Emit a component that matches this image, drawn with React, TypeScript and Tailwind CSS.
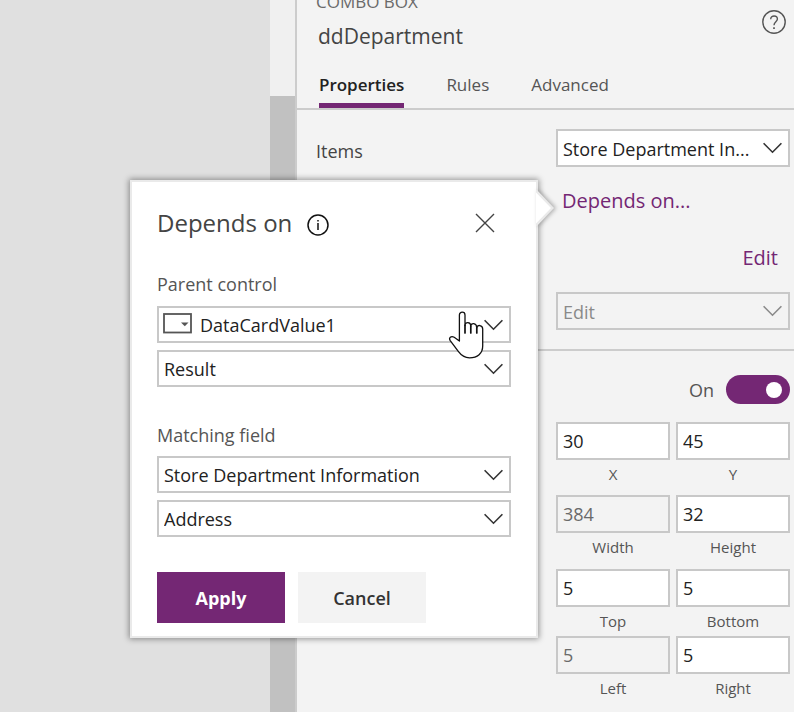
import { useState } from 'react'
import type { ReactNode } from 'react'

type SelectProps = {
  label: string
  options: string[]
  icon?: ReactNode
  disabled?: boolean
  className?: string
}

function Chevron({ disabled }: { disabled?: boolean }) {
  return (
    <svg
      className="pointer-events-none absolute right-2 top-1/2 -translate-y-1/2"
      width="19"
      height="12"
      viewBox="0 0 19 12"
      fill="none"
      stroke={disabled ? '#8a8a8a' : '#333333'}
      strokeWidth="1.6"
    >
      <path d="M0.6 1.2 9.5 10.2 18.4 1.2" />
    </svg>
  )
}

function Select({ label, options, icon, disabled, className = 'h-[37px]' }: SelectProps) {
  return (
    <div className={`relative ${disabled ? 'text-[#8a8a8a]' : 'text-[#222222]'}`}>
      <select
        aria-label={label}
        disabled={disabled}
        className={`block w-full appearance-none border-2 border-[#c8c8c8] pr-7 pt-px text-lg ${
          icon ? 'pl-[41px]' : 'pl-[5px]'
        } ${disabled ? 'bg-[#f3f3f3] opacity-100' : 'bg-white'} ${className}`}
      >
        {options.map((option) => (
          <option key={option}>{option}</option>
        ))}
      </select>
      {icon}
      <Chevron disabled={disabled} />
    </div>
  )
}

function ComboIcon() {
  return (
    <svg
      className="pointer-events-none absolute left-[6px] top-[7px]"
      width="29"
      height="21"
      viewBox="0 0 29 21"
    >
      <rect x="1" y="1" width="27" height="18.5" fill="#fff" stroke="#555" strokeWidth="1.8" />
      <path d="M18 9.5h7.5l-3.7 3.8z" fill="#555" />
    </svg>
  )
}

function HandPointer() {
  return (
    <svg
      className="pointer-events-none absolute right-[51px] top-[129px]"
      width="37"
      height="49"
      viewBox="0 0 37 49"
      fill="#fff"
      stroke="#111"
      strokeWidth="1.3"
      strokeLinecap="round"
      strokeLinejoin="round"
    >
      <path d="M11.4 30V4A2.8 2.8 0 0 1 17 4V14.5C17 10.6 22.6 10.6 22.8 15C22.8 11.6 28.6 11.8 28.8 16.6C29.2 13.4 34.7 13.8 34.7 18V35C34.7 42.5 29.5 46.8 21.5 46.8C15.5 46.8 12.8 43.8 10.3 40.4L2.4 29.8C0.2 26.6 3.2 24.6 6.2 26.2Z" />
      <path d="M17 14V22M22.8 15V22M28.8 16.6V22" strokeWidth="1.7" />
    </svg>
  )
}

function DependsOnCallout({ onClose }: { onClose: () => void }) {
  return (
    <div
      role="dialog"
      aria-labelledby="depends-title"
      className="absolute right-64 top-[180px] w-[408px] border-2 border-[#eaeaea] bg-white px-[25px] pb-[13px] pt-[23px] shadow-[0_0_6px_1px_rgba(0,0,0,0.4)]"
    >
      <svg
        className="absolute -right-[22px] top-0 drop-shadow-[2px_0_2px_rgba(0,0,0,0.3)]"
        width="22"
        height="52"
        viewBox="0 0 22 52"
      >
        <path d="M0 8 1 8 18 26 1 44 0 44z" fill="#eaeaea" />
        <path d="M0 10.5 15 26 0 41.5z" fill="#fff" />
      </svg>

      <div className="flex h-9 items-center">
        <h2 id="depends-title" className="text-2xl text-[#444444]">
          Depends on
        </h2>
        <svg
          className="ml-[15px] mt-1"
          width="22"
          height="22"
          viewBox="0 0 22 22"
          fill="none"
          stroke="#111"
          strokeWidth="1.5"
        >
          <circle cx="11" cy="11" r="10" />
          <path d="M11 9v7M11 6v1.6" />
        </svg>
        <button type="button" aria-label="Close" onClick={onClose} className="ml-auto mr-4">
          <svg width="20" height="20" viewBox="0 0 20 20" stroke="#444" strokeWidth="1.4">
            <path d="M1 1 19 19M19 1 1 19" />
          </svg>
        </button>
      </div>

      <h3 className="mt-[29px] text-lg leading-7 text-[#555555]">Parent control</h3>
      <div className="mt-2 flex flex-col gap-[7px]">
        <Select label="Parent control" options={['DataCardValue1']} icon={<ComboIcon />} />
        <Select label="Parent control field" options={['Result']} />
      </div>

      <h3 className="mt-[34px] text-lg leading-7 text-[#555555]">Matching field</h3>
      <div className="mt-[7px] flex flex-col gap-[7px]">
        <Select label="Matching source" options={['Store Department Information']} />
        <Select label="Matching field" options={['Address']} />
      </div>

      <div className="mt-[35px] flex gap-[13px] text-lg">
        <button
          type="button"
          onClick={onClose}
          className="h-[51px] w-32 bg-[#742774] font-bold text-white"
        >
          Apply
        </button>
        <button
          type="button"
          onClick={onClose}
          className="h-[51px] w-32 bg-[#f3f3f3] font-semibold text-[#333333]"
        >
          Cancel
        </button>
      </div>
      <HandPointer />
    </div>
  )
}

type FieldProps = { label: string; value: string; disabled?: boolean }

function NumberField({ label, value, disabled }: FieldProps) {
  const id = `field-${label.toLowerCase()}`
  return (
    <div>
      <input
        id={id}
        defaultValue={value}
        disabled={disabled}
        className="block h-[38px] w-full border-2 border-[#c8c8c8] bg-white px-[5px] text-lg text-[#222222] disabled:bg-[#f3f3f3] disabled:text-[#6a6a6a]"
      />
      <label htmlFor={id} className="block text-center text-[15px] leading-[29px] text-[#555555]">
        {label}
      </label>
    </div>
  )
}

const tabs = ['Properties', 'Rules', 'Advanced']

export default function App() {
  const [tab, setTab] = useState('Properties')
  const [open, setOpen] = useState(true)
  const [visible, setVisible] = useState(true)

  return (
    <div className="relative flex min-h-screen overflow-hidden bg-[#e0e0e0] font-['Open_Sans','Noto_Sans',sans-serif]">
      <main className="w-[34%]" />
      <div className="w-[25px] bg-[#f0f0f0] pt-24">
        <div className="h-full bg-[#c1c1c1]" />
      </div>

      <aside className="flex-1 border-l-2 border-[#cccccc] bg-[#f3f3f3]">
        <header className="border-b-2 border-[#cccccc] pl-[19px]">
          <p className="-mt-2 text-[17px] leading-5 text-[#6a6a6a]">COMBO BOX</p>
          <div className="mt-2 flex items-start justify-between pl-0.5 pr-2">
            <h1 className="text-[21px] leading-8 text-[#444444]">ddDepartment</h1>
            <button type="button" aria-label="Help" className="-mt-2.5">
              <svg width="24" height="24" viewBox="0 0 24 24" fill="none" stroke="#555" strokeWidth="1.4">
                <circle cx="12" cy="12" r="11.2" />
                <path d="M8.7 9.2C8.7 4.9 15.4 5 15.4 9.1C15.4 11.6 12 12 12 15.2" />
                <path d="M12 17.2v1.8" strokeWidth="1.7" />
              </svg>
            </button>
          </div>
          <nav className="ml-[3px] mt-5 flex gap-[42px] text-[17px]">
            {tabs.map((name) => (
              <button
                key={name}
                type="button"
                onClick={() => setTab(name)}
                className={`h-9 border-b-[5px] pb-1.5 leading-6 ${
                  tab === name
                    ? 'border-[#742774] font-semibold text-[#222222]'
                    : 'border-transparent text-[#555555]'
                }`}
              >
                {name}
              </button>
            ))}
          </nav>
        </header>

        <section className="border-b-2 border-[#cccccc] pb-[19px] pl-[19px] pr-1 pt-[19px]">
          <div className="flex items-center justify-between">
            <span className="mt-1.5 text-lg text-[#444444]">Items</span>
            <div className="w-[234px]">
              <Select label="Items" options={['Store Department In...']} className="h-[38px]" />
            </div>
          </div>
          <div className="ml-auto mt-5 w-[234px] pl-[6px] text-xl leading-7 text-[#742774]">
            <button type="button" onClick={() => setOpen(true)} className="block">
              Depends on...
            </button>
            <button type="button" className="ml-auto mr-3 mt-[29px] block">
              Edit
            </button>
          </div>
          <div className="ml-auto mt-5 w-[234px]">
            <Select label="Fields" options={['Edit']} disabled className="h-[38px]" />
          </div>
        </section>

        <section className="ml-auto mr-1 w-[234px] pt-6">
          <label className="flex items-center justify-end gap-3 text-lg text-[#555555]">
            On
            <input
              type="checkbox"
              role="switch"
              checked={visible}
              onChange={(e) => setVisible(e.target.checked)}
              className="flex h-[29px] w-16 appearance-none items-center rounded-full bg-[#8a8a8a] px-2 before:size-4 before:rounded-full before:bg-white checked:justify-end checked:bg-[#742774]"
            />
          </label>
          <div className="mt-[18px] grid grid-cols-2 gap-x-1.5">
            <NumberField label="X" value="30" />
            <NumberField label="Y" value="45" />
          </div>
          <div className="mt-1.5 grid grid-cols-2 gap-x-1.5">
            <NumberField label="Width" value="384" disabled />
            <NumberField label="Height" value="32" />
          </div>
          <div className="mt-[7px] grid grid-cols-2 gap-x-1.5">
            <NumberField label="Top" value="5" />
            <NumberField label="Bottom" value="5" />
            <NumberField label="Left" value="5" disabled />
            <NumberField label="Right" value="5" />
          </div>
        </section>
      </aside>

      {open && <DependsOnCallout onClose={() => setOpen(false)} />}
    </div>
  )
}
